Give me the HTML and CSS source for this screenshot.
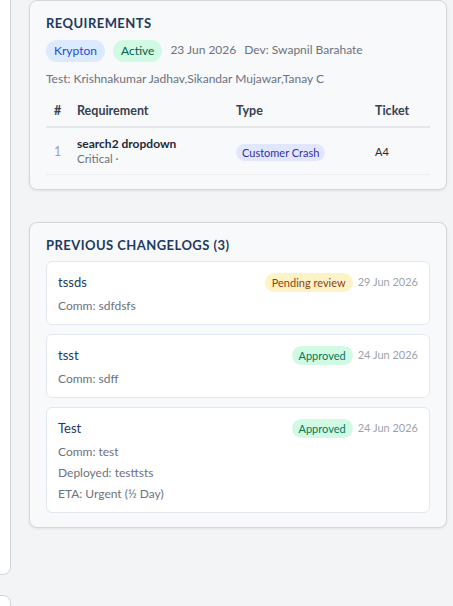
FILE: index.html
```html
<!DOCTYPE html>
<html lang="en">
<head>
    <meta charset="UTF-8">
    <title>Requirement Details</title>
    <meta name="viewport" content="width=device-width, initial-scale=1.0">
    <link rel="stylesheet" href="styles.css">
</head>
<body>

    <div class="layout">
        <!-- Left column (details cards) -->
        <aside class="side">
            <div class="side-card side-card-tall"></div>
            <div class="side-card"></div>
        </aside>

        <main class="main">
            <!-- Requirements -->
            <section class="panel">
                <h2 class="panel-title">REQUIREMENTS</h2>
                <div class="meta">
                    <span class="pill pill-blue">Krypton</span>
                    <span class="pill pill-green">Active</span>
                    <span class="meta-text">23 Jun 2026</span>
                    <span class="meta-text">Dev: Swapnil Barahate</span>
                </div>
                <div class="testers">Test: Krishnakumar Jadhav,Sikandar Mujawar,Tanay C</div>

                <table class="req-table">
                    <thead>
                        <tr>
                            <th class="col-num">#</th>
                            <th class="col-req">Requirement</th>
                            <th class="col-type">Type</th>
                            <th class="col-ticket">Ticket</th>
                        </tr>
                    </thead>
                    <tbody>
                        <tr>
                            <td class="row-num">1</td>
                            <td>
                                <div class="req-name">search2 dropdown</div>
                                <div class="req-sub">Critical ·</div>
                            </td>
                            <td><span class="type-tag">Customer Crash</span></td>
                            <td class="ticket">A4</td>
                        </tr>
                    </tbody>
                </table>
            </section>

            <!-- Changelogs -->
            <section class="panel">
                <h2 class="panel-title">PREVIOUS CHANGELOGS (3)</h2>
                <div class="log-list">
                    <div class="log-item">
                        <div class="log-head">
                            <span class="log-name">tssds</span>
                            <div class="log-right">
                                <span class="status status-pending">Pending review</span>
                                <span class="log-date">29 Jun 2026</span>
                            </div>
                        </div>
                        <div class="log-lines">
                            <div>Comm: sdfdsfs</div>
                        </div>
                    </div>

                    <div class="log-item">
                        <div class="log-head">
                            <span class="log-name">tsst</span>
                            <div class="log-right">
                                <span class="status status-approved">Approved</span>
                                <span class="log-date">24 Jun 2026</span>
                            </div>
                        </div>
                        <div class="log-lines">
                            <div>Comm: sdff</div>
                        </div>
                    </div>

                    <div class="log-item">
                        <div class="log-head">
                            <span class="log-name">Test</span>
                            <div class="log-right">
                                <span class="status status-approved">Approved</span>
                                <span class="log-date">24 Jun 2026</span>
                            </div>
                        </div>
                        <div class="log-lines">
                            <div>Comm: test</div>
                            <div>Deployed: testtsts</div>
                            <div>ETA: Urgent (½ Day)</div>
                        </div>
                    </div>
                </div>
            </section>
        </main>
    </div>

</body>
</html>
```

FILE: styles.css
```css
body {
    margin: 0;
    padding: 0;
    background-color: #f3f4f6;
    font-family: Lato, "Noto Sans", Arial, sans-serif;
    color: #374151;
    overflow: hidden;
}

.layout {
    display: flex;
    align-items: flex-start;
    gap: 18px;
    margin-left: -289px;
    padding-right: 6px;
}

/* Left column */
.side {
    flex: 0 0 300px;
    display: flex;
    flex-direction: column;
    gap: 20px;
    margin-top: -40px;
}

.side-card {
    height: 200px;
    background-color: #fff;
    border: 1px solid #d1d5db;
    border-radius: 8px;
    box-sizing: border-box;
}

.side-card-tall {
    height: 615px;
}

/* Right column */
.main {
    flex: 1;
    display: flex;
    flex-direction: column;
    gap: 32px;
}

.panel {
    background-color: #f8f9fb;
    border: 1px solid #d4d7dc;
    border-radius: 8px;
    padding: 12px 16px 14px;
    box-shadow: 0 1px 3px rgba(0, 0, 0, 0.08);
}

.panel-title {
    margin: 0;
    font-size: 13px;
    line-height: 20px;
    font-weight: 700;
    letter-spacing: 0.45px;
    color: #1e3a5f;
}

.meta {
    display: flex;
    align-items: center;
    gap: 8px;
    margin-top: 7px;
}

.pill {
    display: inline-block;
    padding: 3px 8px;
    border-radius: 11px;
    font-size: 12px;
    line-height: 16px;
}

.pill-blue {
    background-color: #dbeafe;
    color: #1d4ed8;
}

.pill-green {
    background-color: #d1fae5;
    color: #065f46;
}

.meta-text {
    font-size: 12px;
    color: #6b7280;
    margin-top: -3px;
}

.testers {
    margin-top: 8px;
    font-size: 12px;
    line-height: 18px;
    color: #6b7280;
}

/* Requirements table */
.req-table {
    width: 100%;
    margin-top: 9px;
    border-collapse: collapse;
    table-layout: fixed;
}

.req-table th {
    padding: 6px 8px 7px;
    text-align: left;
    font-size: 12.5px;
    line-height: 16px;
    font-weight: 700;
    color: #374151;
    border-bottom: 2px solid #e5e7eb;
}

.req-table td {
    padding: 8px 8px;
    border-bottom: 1px solid #eceef2;
    vertical-align: middle;
}

.req-table .col-num,
.req-table .row-num {
    width: 15px;
    padding-right: 0;
}

.col-req { width: 143px; }
.col-type { width: 123px; }

.row-num {
    font-size: 12.5px;
    color: #9ca3af;
}

.req-name {
    font-size: 12px;
    line-height: 16px;
    font-weight: 700;
    color: #1f2937;
}

.req-sub {
    font-size: 11.5px;
    line-height: 14px;
    color: #6b7280;
}

.type-tag {
    display: inline-block;
    padding: 1px 6px;
    border-radius: 9px;
    background-color: #e0e7ff;
    color: #3730a3;
    font-size: 11px;
    line-height: 15px;
}

.ticket {
    font-size: 11px;
    color: #1f2937;
}

/* Changelog list */
.log-list {
    display: flex;
    flex-direction: column;
    gap: 9px;
    margin-top: 6px;
}

.log-item {
    background-color: #fff;
    border: 1px solid #e2e8f0;
    border-radius: 6px;
    padding: 10px 11px 8px;
}

.log-head {
    display: flex;
    justify-content: space-between;
    align-items: center;
}

.log-name {
    font-size: 13px;
    line-height: 20px;
    color: #1e3a5f;
}

.log-right {
    display: flex;
    align-items: center;
    gap: 5px;
}

.status {
    display: inline-block;
    padding: 1px 7px;
    border-radius: 10px;
    font-size: 11px;
    line-height: 17px;
}

.status-pending {
    background-color: #fef3c7;
    color: #92400e;
}

.status-approved {
    background-color: #d1fae5;
    color: #047857;
}

.log-date {
    font-size: 11px;
    color: #9ca3af;
    margin-top: -2px;
}

.log-lines {
    margin-top: 3px;
    font-size: 12px;
    line-height: 21px;
    color: #6b7280;
}
```
